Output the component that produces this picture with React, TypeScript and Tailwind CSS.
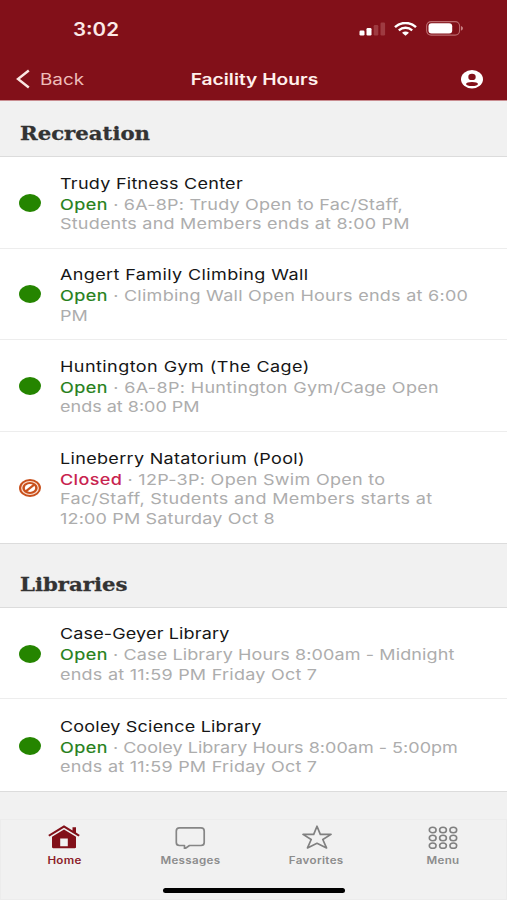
type Line = {
  text: string;
  tracking: string;
};

type Facility = {
  name: Line;
  status: "Open" | "Closed";
  lines: Line[];
};

type Section = {
  title: string;
  facilities: Facility[];
};

const sections: Section[] = [
  {
    title: "Recreation",
    facilities: [
      {
        name: { text: "Trudy Fitness Center", tracking: "tracking-[0.22px]" },
        status: "Open",
        lines: [
          { text: "6A-8P: Trudy Open to Fac/Staff,", tracking: "tracking-[0.18px]" },
          { text: "Students and Members ends at 8:00 PM", tracking: "tracking-[0.17px]" },
        ],
      },
      {
        name: { text: "Angert Family Climbing Wall", tracking: "tracking-[0.32px]" },
        status: "Open",
        lines: [
          { text: "Climbing Wall Open Hours ends at 6:00", tracking: "tracking-[0.22px]" },
          { text: "PM", tracking: "tracking-[0.1px]" },
        ],
      },
      {
        name: { text: "Huntington Gym (The Cage)", tracking: "tracking-[0.37px]" },
        status: "Open",
        lines: [
          { text: "6A-8P: Huntington Gym/Cage Open", tracking: "tracking-[0.28px]" },
          { text: "ends at 8:00 PM", tracking: "tracking-[0px]" },
        ],
      },
      {
        name: { text: "Lineberry Natatorium (Pool)", tracking: "tracking-[0.27px]" },
        status: "Closed",
        lines: [
          { text: "12P-3P: Open Swim Open to", tracking: "tracking-[0.24px]" },
          { text: "Fac/Staff, Students and Members starts at", tracking: "tracking-[0.29px]" },
          { text: "12:00 PM Saturday Oct 8", tracking: "tracking-[0.14px]" },
        ],
      },
    ],
  },
  {
    title: "Libraries",
    facilities: [
      {
        name: { text: "Case-Geyer Library", tracking: "tracking-[0.12px]" },
        status: "Open",
        lines: [
          { text: "Case Library Hours 8:00am - Midnight", tracking: "tracking-[0.1px]" },
          { text: "ends at 11:59 PM Friday Oct 7", tracking: "tracking-[0.2px]" },
        ],
      },
      {
        name: { text: "Cooley Science Library", tracking: "tracking-[0.17px]" },
        status: "Open",
        lines: [
          { text: "Cooley Library Hours 8:00am - 5:00pm", tracking: "tracking-[0.01px]" },
          { text: "ends at 11:59 PM Friday Oct 7", tracking: "tracking-[0.2px]" },
        ],
      },
    ],
  },
];

function StatusIcon({ status }: { status: Facility["status"] }) {
  if (status === "Open") {
    return <span className="-mt-px h-[18px] w-[22px] shrink-0 rounded-[50%] bg-[#258500]" />;
  }
  return (
    <svg className="-mt-px h-[18px] w-[22px] shrink-0" viewBox="0 0 22 18">
      <ellipse cx="11" cy="9" rx="11" ry="9" fill="#c9501c" />
      <ellipse cx="11" cy="9" rx="8.9" ry="7.1" fill="#fbe3d6" />
      <ellipse cx="11" cy="9" rx="7.7" ry="6" fill="#c9501c" />
      <ellipse cx="11" cy="9" rx="5.2" ry="3.9" fill="#fff" />
      <path d="M6.5 12.6 15.5 5.4" stroke="#c9501c" strokeWidth="2.1" />
    </svg>
  );
}

function FacilityRow({ facility, last }: { facility: Facility; last: boolean }) {
  return (
    <li
      className={`flex items-center pl-[19px] pt-[2px] ${facility.lines.length === 3 ? "h-[111px]" : "h-[91.6px]"} ${
        last ? "" : "border-b border-[#ededed]"
      }`}
    >
      <StatusIcon status={facility.status} />
      <div className="ml-[19px] origin-left scale-x-[1.2] whitespace-nowrap text-[15px] leading-[19.6px]">
        <p className={`leading-[22px] text-[#161616] ${facility.name.tracking}`}>{facility.name.text}</p>
        {facility.lines.map((line, i) => (
          <p key={line.text} className={`text-[#adadad] ${line.tracking}`}>
            {i === 0 && (
              <>
                <span
                  className={
                    facility.status === "Open"
                      ? "tracking-[0.4px] text-[#258019] [-webkit-text-stroke:0.2px_#258019]"
                      : "font-medium tracking-[0.3px] text-[#c8234f]"
                  }
                >
                  {facility.status}
                </span>
                {" · "}
              </>
            )}
            {line.text}
          </p>
        ))}
      </div>
    </li>
  );
}

function StatusBar() {
  return (
    <div className="flex h-[58px] items-center justify-between pl-[73px] pr-[43px]">
      <span className="origin-left scale-x-[1.14] text-[18px] font-semibold text-[#fbe9e6]">3:02</span>
      <div className="-mt-px flex items-center">
        <svg className="h-[14px] w-[27px]" viewBox="0 0 27 14">
          <rect x="0.5" y="8.5" width="5" height="5" rx="1.2" fill="#fff" />
          <rect x="7.5" y="6" width="5" height="7.5" rx="1.2" fill="#fff" />
          <rect x="14.7" y="3" width="4.6" height="10.5" rx="1.2" fill="#9e3b41" />
          <rect x="21.5" y="0.5" width="4.6" height="13" rx="1.2" fill="#9e3b41" />
        </svg>
        <svg className="ml-[8px] h-[14px] w-[23px]" viewBox="0 0 23 14" fill="none" stroke="#fff">
          <path d="M1 5.1C6.6-.4 16.4-.4 22 5.1" strokeWidth="2.4" />
          <path d="M4.8 8.3c3.8-3.4 9.6-3.4 13.4 0" strokeWidth="2.3" />
          <path d="M8 10.8c2-1.7 5-1.7 7 0L11.5 13.8z" fill="#fff" stroke="none" />
        </svg>
        <svg className="ml-[9px] h-[15px] w-[38px]" viewBox="0 0 38 15">
          <rect x="0.6" y="0.6" width="33" height="13.5" rx="4.5" fill="none" stroke="#bb6a6e" strokeWidth="1.1" />
          <rect x="2.5" y="2.3" width="23.7" height="10.1" rx="3" fill="#fff" />
          <path d="M35 5v4.6c2.6-.9 2.6-3.7 0-4.6z" fill="#c88084" />
        </svg>
      </div>
    </div>
  );
}

function NavBar() {
  return (
    <div className="grid h-[42px] grid-cols-[1fr_auto_1fr] items-center pl-4 pr-[24px] pt-px">
      <div className="-mt-px flex items-center">
        <svg className="h-[20px] w-[14px]" viewBox="0 0 14 20" fill="none" stroke="#fbe6e2" strokeWidth="2.4">
          <path d="M12.8 1.5 2 10l10.8 8.5" />
        </svg>
        <span className="ml-[10px] origin-left scale-x-[1.18] text-[16px] text-[#eebdb9]">Back</span>
      </div>
      <span className="ml-[9px] scale-x-[1.24] text-[15.5px] font-semibold text-[#fff0ec]">Facility Hours</span>
      <svg className="h-[18.5px] w-[22px] justify-self-end" viewBox="0 0 22 18.5">
        <ellipse cx="11" cy="9.25" rx="11" ry="9.25" fill="#fff" />
        <ellipse cx="11" cy="6.9" rx="3.7" ry="3.2" fill="#821019" />
        <ellipse cx="11" cy="14" rx="6" ry="2.1" fill="#821019" />
      </svg>
    </div>
  );
}

function HomeIcon() {
  return (
    <svg className="h-[24px] w-[32px]" viewBox="0 0 32 24" fill="#821019">
      <path d="M16 .3.2 10l1.300 1.600L16 2.800l14.500 8.800 1.300-1.600-3.800-2.400V2.300h-3.500v3.100z" />
      <path
        fillRule="evenodd"
        d="M16 4.500 4 11.800V22c0 .8.4 1.200 1.200 1.200h21.600c.8 0 1.200-.4 1.200-1.200V11.800zM12.200 13.500h7.600v7.800h-7.600z"
      />
    </svg>
  );
}

function MessagesIcon() {
  return (
    <svg className="h-[24px] w-[32px]" viewBox="0 0 32 24" fill="none" stroke="#868686" strokeWidth="1.7" strokeLinejoin="round">
      <path d="M5.500 2.900h21.500c2.200 0 3.200 1 3.200 3v11.600c0 2-1 3-3.200 3H15.500L10.500 24v-3.500h-5c-2.200 0-3.200-1-3.200-3V5.900c0-2 1-3 3.200-3z" />
    </svg>
  );
}

function FavoritesIcon() {
  return (
    <svg className="h-[24px] w-[32px]" viewBox="0 0 32 24" fill="none" stroke="#808080" strokeWidth="1.7" strokeLinejoin="round">
      <path d="m16 1.200 3.300 8.200H30l-8.200 5.100 3.700 8.400L16 18.300l-9.500 4.600 3.700-8.400L2 9.400h10.700z" />
    </svg>
  );
}

function MenuIcon() {
  return (
    <svg className="h-[24px] w-[32px]" viewBox="0 0 32 24" fill="none" stroke="#808080" strokeWidth="1.6">
      {[5, 13, 20.7].map((cy) =>
        [5.7, 16, 26.3].map((cx) => <ellipse key={`${cx}-${cy}`} cx={cx} cy={cy} rx="3.4" ry="2.7" />)
      )}
    </svg>
  );
}

const tabs = [
  { label: "Home", icon: HomeIcon, active: true },
  { label: "Messages", icon: MessagesIcon, active: false },
  { label: "Favorites", icon: FavoritesIcon, active: false },
  { label: "Menu", icon: MenuIcon, active: false },
];

function TabBar() {
  return (
    <nav className="flex h-[81px] flex-col border border-[#ececec] bg-[#f1f1f1]">
      <div className="grid grid-cols-4 pt-[5px]">
        {tabs.map(({ label, icon: Icon, active }) => (
          <button
            key={label}
            className={`flex flex-col items-center ${active ? "text-[#8c1d2b]" : "text-[#8c8c8c]"}`}
          >
            <Icon />
            <span className="mt-[5px] scale-x-[1.18] text-[9.8px] font-semibold leading-[14px] tracking-[0.3px]">
              {label}
            </span>
          </button>
        ))}
      </div>
      <div className="mx-auto mt-[19.5px] h-[5px] w-[182px] rounded-full bg-black" />
    </nav>
  );
}

export default function App() {
  return (
    <div className="flex h-[900px] w-[507px] flex-col overflow-hidden bg-[#f1f1f1] font-['Inter','Liberation_Sans',sans-serif]">
      <header className="h-[101px] shrink-0 border-b border-[#c98d91] bg-[#821019]">
        <StatusBar />
        <NavBar />
      </header>
      <main className="flex-1">
        {sections.map((section, i) => (
          <section key={section.title}>
            <h2
              className={`flex items-end border-b border-[#dcdcdc] pb-[10px] pl-5 font-['DejaVu_Serif',serif] text-[18px] font-bold leading-[24px] text-[#333] [-webkit-text-stroke:0.3px_#333] ${
                i === 0 ? "h-[56px]" : "h-[64px]"
              }`}
            >
              <span className="origin-left scale-x-[1.18]">{section.title}</span>
            </h2>
            <ul className="border-b border-[#dcdcdc] bg-white">
              {section.facilities.map((facility, j) => (
                <FacilityRow
                  key={facility.name.text}
                  facility={facility}
                  last={j === section.facilities.length - 1}
                />
              ))}
            </ul>
          </section>
        ))}
      </main>
      <TabBar />
    </div>
  );
}
